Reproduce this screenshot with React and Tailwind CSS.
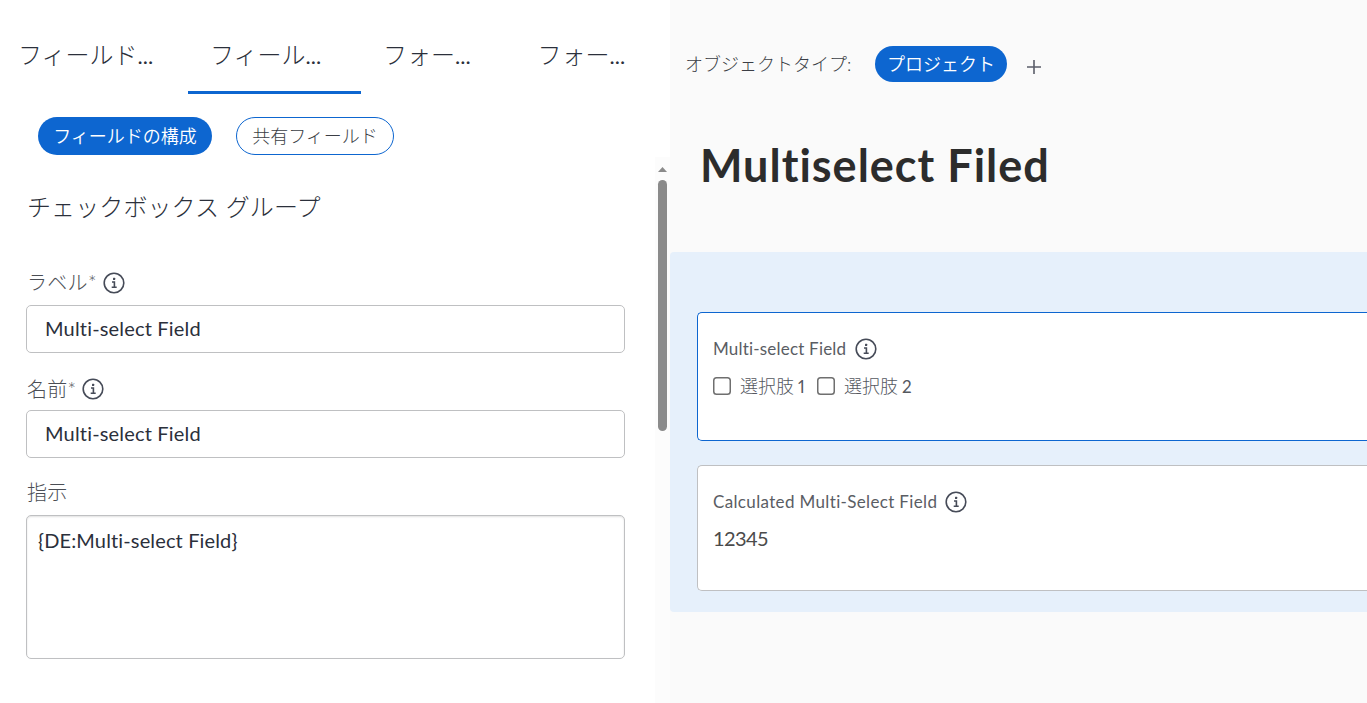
function InfoIcon() {
  return (
    <svg width="22" height="22" viewBox="0 0 22 22" fill="none" className="shrink-0">
      <circle cx="11" cy="11" r="9.8" stroke="#464b58" strokeWidth="1.6" />
      <rect x="10" y="5.8" width="2.2" height="2.2" rx="0.5" fill="#464b58" />
      <path d="M9 10h2.4v5M8.7 15.2h5" stroke="#464b58" strokeWidth="1.6" />
    </svg>
  );
}

function Tab({ label, className }) {
  return (
    <div className={`h-full shrink-0 pt-[39px] text-2xl leading-8 font-light whitespace-nowrap text-[#2b303b] ${className}`}>
      {label}<span className="text-[22px] font-normal">...</span>
    </div>
  );
}

function TextField({ value }) {
  return (
    <div className="flex h-12 w-[599px] items-center rounded-[5px] border border-[#bfc0c2] bg-white px-[18px] pb-0.5 text-[20px] tracking-[0.18px] text-[#2b303b]">
      {value}
    </div>
  );
}

function FieldLabel({ children }) {
  return <span className="pl-px text-[20px] leading-6 font-light tracking-[0.3px] whitespace-nowrap text-[#4b4e55]">{children}</span>;
}

function Option({ label, number }) {
  return (
    <label className="flex items-center whitespace-nowrap text-[#55585f]">
      <svg width="18" height="18" viewBox="0 0 18 18" className="mr-[9px] shrink-0">
        <rect x="0.75" y="0.75" width="16.5" height="16.5" rx="2.8" fill="#fff" stroke="#6f6f6f" strokeWidth="1.5" />
      </svg>
      <span className="text-[18px] leading-6 font-light">{label}</span>
      <span className="ml-1 w-2 pt-px text-[17px] leading-6 proportional-nums">{number}</span>
    </label>
  );
}

export default function App() {
  return (
    <div className="flex h-[703px] w-[1367px] overflow-hidden bg-white font-['Lato','Noto_Sans_CJK_JP',sans-serif] [font-variant-ligatures:none]">
      <section className="flex w-[655px] shrink-0 flex-col">
        <nav className="flex h-[94px] shrink-0">
          <Tab label="フィールド" className="w-[188px] pl-[18px]" />
          <Tab label="フィール" className="w-[173px] border-b-3 border-[#0d66d0] pl-[22px]" />
          <Tab label="フォー" className="w-[155px] pl-[22px]" />
          <Tab label="フォー" className="pl-[21.5px]" />
        </nav>
        <div className="mt-[23px] flex h-[38px] shrink-0 gap-6 pl-[38px] text-[18px]">
          <button className="flex w-[174px] items-center justify-center rounded-full bg-[#0d66d0] font-[350] whitespace-nowrap text-white">フィールドの構成</button>
          <button className="flex w-[158px] items-center justify-center rounded-full border border-[#0d66d0] font-light whitespace-nowrap text-[#3b3e45]">共有フィールド</button>
        </div>
        <div className="flex flex-col pl-[26px]">
          <h2 className="mt-9 h-8 pl-px text-2xl leading-8 font-light tracking-[0.1px] text-[#2b303b]">チェックボックス グループ</h2>
          <div className="mt-12 flex h-6 items-center gap-[6px]"><span className="-mt-0.5 flex"><FieldLabel>ラベル*</FieldLabel></span><InfoIcon /></div>
          <div className="mt-[10px]"><TextField value="Multi-select Field" /></div>
          <div className="mt-6 flex h-6 items-center gap-[6px]"><FieldLabel>名前*</FieldLabel><InfoIcon /></div>
          <div className="mt-[9px]"><TextField value="Multi-select Field" /></div>
          <div className="mt-[22px] flex h-6 items-center"><FieldLabel>指示</FieldLabel></div>
          <div className="mt-[11px] h-36 w-[599px] rounded-[5px] border border-[#bfc0c2] pt-3 pl-[11px] text-[20px] leading-6 tracking-[0.14px] text-[#2b303b] shadow-[inset_0_1px_2px_rgba(0,0,0,0.12)]">
            {"{DE:Multi-select Field}"}
          </div>
        </div>
      </section>

      <div className="flex w-[15px] shrink-0 flex-col pt-[157px]">
        <div className="flex grow flex-col items-center bg-[#fcfcfc] pt-[10px]">
          <svg width="9" height="5" viewBox="0 0 9 5"><path d="M0 5 4.5 0 9 5z" fill="#8b8b8b" /></svg>
          <div className="mt-2 h-[251px] w-[9px] rounded-full bg-[#8b8b8b]" />
        </div>
      </div>

      <main className="flex min-w-0 grow flex-col bg-[#fafafa]">
        <div className="mt-[46px] flex h-9 shrink-0 items-center pl-[15px] text-[18px]">
          <span className="w-[190px] font-light whitespace-nowrap text-[#3b3e45]">オブジェクトタイプ:</span>
          <span className="flex h-9 w-[132px] items-center justify-center rounded-full bg-[#0d66d0] font-[350] whitespace-nowrap text-white">プロジェクト</span>
          <svg width="14" height="14" viewBox="0 0 14 14" className="mt-[6px] ml-5"><path d="M7 0v14M0 7h14" stroke="#5b5e69" strokeWidth="1.6" /></svg>
        </div>
        <h1 className="mt-[55px] h-14 shrink-0 pl-[30px] text-[45px] leading-[56px] font-bold tracking-[1px] whitespace-nowrap text-[#2c2c2c]">Multiselect Filed</h1>
        <div className="mt-[59px] flex h-[360px] shrink-0 flex-col gap-6 overflow-hidden rounded-l-[4px] bg-[#e6f0fb] pt-[60px] pl-[27px]">
          <div className="h-[129px] shrink-0 rounded-l-[5px] border border-r-0 border-[#0d66d0] bg-white pt-6 pl-[15px]">
            <div className="flex h-6 items-center whitespace-nowrap text-[#5a5d64]"><span className="w-[142px] text-[17px] tracking-[0.2px]">Multi-select Field</span><InfoIcon /></div>
            <div className="mt-[13px] flex h-6 gap-[11px]"><Option label="選択肢" number="1" /><Option label="選択肢" number="2" /></div>
          </div>
          <div className="h-[126px] shrink-0 rounded-l-[5px] border border-r-0 border-[#bfc0c2] bg-white pt-6 pl-[15px]">
            <div className="flex h-6 items-center whitespace-nowrap text-[#5a5d64]"><span className="w-[232px] text-[17px] tracking-[0.35px]">Calculated Multi-Select Field</span><InfoIcon /></div>
            <div className="mt-3 text-[20px] leading-6 tracking-[-0.6px] text-[#4b4b4b]">12345</div>
          </div>
        </div>
      </main>
    </div>
  );
}
